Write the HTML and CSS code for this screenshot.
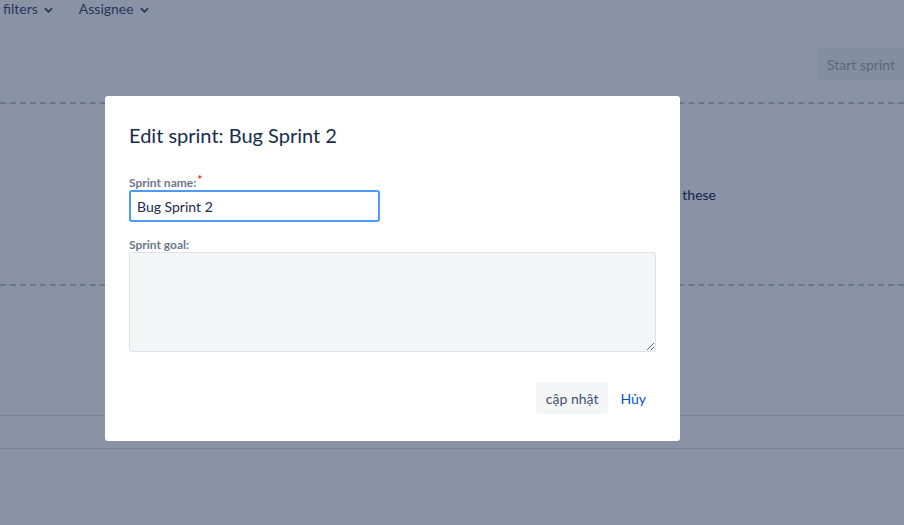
FILE: index.html
```html
<!DOCTYPE html>
<html lang="vi">
<head>
<meta charset="utf-8">
<title>Edit sprint</title>
<link rel="stylesheet" href="styles.css">
</head>
<body>
<div class="page">
  <div class="filters">
    <span class="filter">filters <svg class="chev" viewBox="0 0 10 6" width="9" height="6"><path d="M1 1l4 4 4-4" fill="none" stroke="currentColor" stroke-width="2"/></svg></span>
    <span class="filter">Assignee <svg class="chev" viewBox="0 0 10 6" width="9" height="6"><path d="M1 1l4 4 4-4" fill="none" stroke="currentColor" stroke-width="2"/></svg></span>
  </div>
  <div class="sprint-head">
    <button class="start-btn" type="button">Start sprint</button>
  </div>
  <div class="sprint-body">
    <p class="empty-text">Plan a sprint by dragging issues here from the backlog, or by creating these</p>
  </div>
  <div class="backlog-space"></div>
  <div class="rule"></div>
  <div class="rule second"></div>
</div>

<div class="blanket"></div>

<div class="dialog" role="dialog">
  <h2 class="dialog-title">Edit sprint: Bug Sprint 2</h2>
  <label class="field-label" for="sname">Sprint name:<span class="req">*</span></label>
  <input id="sname" class="text-input" type="text" value="Bug Sprint 2">
  <label class="field-label goal" for="sgoal">Sprint goal:</label>
  <textarea id="sgoal" class="goal-input"></textarea>
  <div class="dialog-footer">
    <button class="btn btn-default" type="button">cập nhật</button>
    <button class="btn btn-link" type="button">Hủy</button>
  </div>
</div>
</body>
</html>
```
FILE: styles.css
```css
* { box-sizing: border-box; }
html, body { margin: 0; padding: 0; }
body {
  width: 904px;
  height: 525px;
  overflow: hidden;
  background: #fff;
  font-family: "Lato", "Noto Sans", sans-serif;
  color: #172b4d;
  font-size: 14px;
}
.page { position: relative; height: 525px; }
.filters {
  display: flex;
  gap: 26px;
  padding-left: 3px;
  height: 18px;
  line-height: 16px;
  color: #42526e;
  font-size: 14px;
}
.filter { display: inline-flex; align-items: center; gap: 6px; }
.chev { margin-top: 1px; }
.sprint-head {
  display: flex;
  justify-content: flex-end;
  padding-top: 30px;
  height: 84px;
}
.start-btn {
  height: 32px;
  padding: 0 9px 0 10px;
  border: 0;
  border-radius: 3px;
  background: #f4f5f7;
  color: #a5adba;
  font: inherit;
  font-size: 14px;
}
.sprint-body {
  border-top: 2px dashed #c1c7d0;
  border-bottom: 2px dashed #c1c7d0;
  height: 184px;
  display: flex;
  align-items: center;
}
.empty-text {
  margin: 0;
  width: 100%;
  text-align: right;
  padding-right: 188px;
  color: #172b4d;
  white-space: nowrap;
}
.backlog-space { height: 129px; }
.rule { border-top: 1px solid #dfe1e6; height: 33px; }
.rule.second { height: 1px; }

.blanket {
  position: fixed;
  inset: 0;
  background: rgba(9, 30, 66, 0.48);
}
.dialog {
  position: absolute;
  left: 105px;
  top: 96px;
  width: 575px;
  height: 345px;
  background: #fff;
  border-radius: 3px;
  padding: 27px 24px 27px 24px;
  display: flex;
  flex-direction: column;
  align-items: flex-start;
}
.dialog-title {
  margin: 0;
  font-size: 20px;
  font-weight: 400;
  line-height: 24px;
  color: #172b4d;
  height: 24px;
}
.field-label {
  display: block;
  font-size: 12px;
  font-weight: 700;
  line-height: 14px;
  color: #6b778c;
  margin-top: 26px;
}
.field-label.goal { margin-top: 16px; }
.req { color: #de350b; margin-left: 1px; vertical-align: 3px; font-size: 12px; }
.text-input {
  width: 251px;
  height: 32px;
  border: 2px solid #4c9aff;
  border-radius: 3px;
  padding: 0 6px;
  font: inherit;
  font-size: 14px;
  color: #172b4d;
  background: #fff;
  outline: none;
}
.goal-input {
  width: 527px;
  height: 100px;
  border: 1px solid #dfe1e6;
  border-radius: 3px;
  background: #f4f5f7;
  resize: vertical;
  font: inherit;
  outline: none;
}
.dialog-footer {
  margin-top: auto;
  align-self: stretch;
  display: flex;
  justify-content: flex-end;
  gap: 2px;
}
.btn {
  height: 32px;
  border: 0;
  border-radius: 3px;
  padding: 0 10px;
  font: inherit;
  font-size: 14px;
  cursor: pointer;
}
.btn-default { background: #f4f5f7; color: #42526e; }
.btn-link { background: transparent; color: #0052cc; }
```
